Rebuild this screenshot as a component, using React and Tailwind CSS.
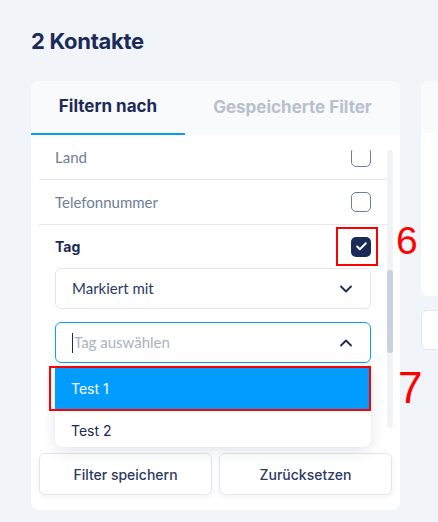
import { Check, ChevronDown, ChevronUp } from 'lucide-react'

// Kontakte filter panel with open tag dropdown

function Checkbox({ checked }) {
    if (checked) {
        return (
            <div className="w-5 h-5 rounded-[5px] bg-[#1b2a57] flex items-center justify-center">
                <Check size={13} strokeWidth={3.5} className="text-white" />
            </div>
        )
    }
    return <div className="w-5 h-5 rounded-[5px] border-[1.5px] border-[#6f7d99] bg-white" />
}

function FilterRow({ label, checked }) {
    return (
        <div className="h-[45px] px-4 flex items-center justify-between border-b border-[#e6e9ee]">
            <span className="text-[15px] leading-[14px] text-[#6f7d99]">{label}</span>
            <Checkbox checked={checked} />
        </div>
    )
}

export default function App() {
    return (
        <div className="min-h-screen w-[438px] h-[522px] overflow-hidden bg-[#f1f4f8] pl-[31px] pt-[28px] font-['Inter',sans-serif]">

            {/* ===== TITLE ===== */}
            <h1 className="text-[22px] leading-[26px] font-bold text-[#1b2a57] tracking-[-0.3px]">2 Kontakte</h1>

            <div className="flex gap-[21px] mt-[27px]">

                {/* ===== FILTER CARD ===== */}
                <div className="w-[369px] h-[429px] shrink-0 bg-white rounded-lg flex flex-col">
                    <div className="h-[54px] bg-[#f8fafc] rounded-t-lg flex">
                        <div className="w-[154px] flex items-center justify-center border-b-2 border-[#0b9cf0] text-[17px] font-bold text-[#1b2a57]">
                            Filtern nach
                        </div>
                        <div className="flex-1 flex items-center justify-center text-[17px] font-bold text-[#b7c0cc]">
                            Gespeicherte Filter
                        </div>
                    </div>

                    {/* Scroll area */}
                    <div className="relative mt-[15px] h-[295px] ml-2 w-[355px]">
                        <div className="h-full overflow-hidden w-[348px] font-['Lato',sans-serif]">
                            <div className="-mt-[15px]">
                                <FilterRow label="Land" />
                                <FilterRow label="Telefonnummer" />
                                <div className="h-[43px] px-4 flex items-center justify-between">
                                    <span className="text-[14px] font-bold text-[#1b2a57] font-['Inter',sans-serif]">Tag</span>
                                    <Checkbox checked />
                                </div>
                                <div className="px-4 flex flex-col gap-[13px]">
                                    <div className="h-[41px] rounded-md border border-[#e3e6eb] flex items-center justify-between pl-4 pr-[14px]">
                                        <span className="text-[15px] text-[#2c3a63]">Markiert mit</span>
                                        <ChevronDown size={20} strokeWidth={2.2} className="text-[#1b2a57]" />
                                    </div>
                                    <div className="h-[41px] rounded-md border border-[#0ea0f0] flex items-center justify-between pl-4 pr-[14px]">
                                        <span className="text-[15px] text-[#a9b2c2] flex items-center">
                                            <span className="w-px h-[20px] bg-[#1b2a57] mr-[1px]" />
                                            Tag auswählen
                                        </span>
                                        <ChevronUp size={20} strokeWidth={2.2} className="text-[#1b2a57]" />
                                    </div>
                                </div>
                            </div>
                        </div>

                        {/* Scrollbar */}
                        <div className="absolute right-[1px] top-0 w-[6px] h-[278px] rounded-full bg-[#f1f2f4]">
                            <div className="absolute top-[120px] w-[6px] h-[83px] rounded-full bg-[#cbd1da]" />
                        </div>

                        {/* Dropdown */}
                        <div className="absolute left-4 top-[216px] w-[316px] bg-white rounded-b-lg shadow-[0_4px_14px_rgba(30,40,80,0.12)]">
                            <div className="h-[44px] bg-[#009cff] flex items-center pl-4 text-[14px] text-white">Test 1</div>
                            <div className="h-[37px] flex items-center pl-4 pt-1 text-[14px] text-[#1b2a57]">Test 2</div>
                        </div>

                        {/* Annotation 7 */}
                        <div className="absolute left-[10px] top-[216px] w-[322px] h-[45px] border-2 border-[#ff0000]" />
                    </div>

                    {/* Buttons */}
                    <div className="flex gap-[7px] px-2 mt-[8px]">
                        <button className="flex-1 h-[42px] rounded-md border border-[#e3e6eb] bg-white text-[14px] font-medium text-[#2c3a63] shadow-[0_2px_6px_rgba(30,40,80,0.05)]">
                            Filter speichern
                        </button>
                        <button className="flex-1 h-[42px] rounded-md border border-[#e3e6eb] bg-white text-[14px] font-medium text-[#2c3a63] shadow-[0_2px_6px_rgba(30,40,80,0.05)]">
                            Zurücksetzen
                        </button>
                    </div>
                </div>

                {/* ===== RIGHT COLUMN (cut off) ===== */}
                <div className="w-[60px] shrink-0 flex flex-col gap-[14px]">
                    <div className="h-[215px] bg-white rounded-lg overflow-hidden">
                        <div className="h-[52px] bg-[#f8fafc]" />
                    </div>
                    <div className="h-[40px] bg-white rounded-md border border-[#e3e6eb]" />
                </div>
            </div>

            {/* Annotation 6 */}
            <div className="absolute left-[336px] top-[227px] w-[42px] h-[39px] border-2 border-[#ff0000]" />
            <div className="absolute left-[396px] top-[220px] text-[39px] leading-[42px] text-[#ff0000] font-['Liberation_Sans',sans-serif]">6</div>
            <div className="absolute left-[398px] top-[365px] text-[44px] leading-[46px] text-[#ff0000] font-['Liberation_Sans',sans-serif]">7</div>
        </div>
    )
}
